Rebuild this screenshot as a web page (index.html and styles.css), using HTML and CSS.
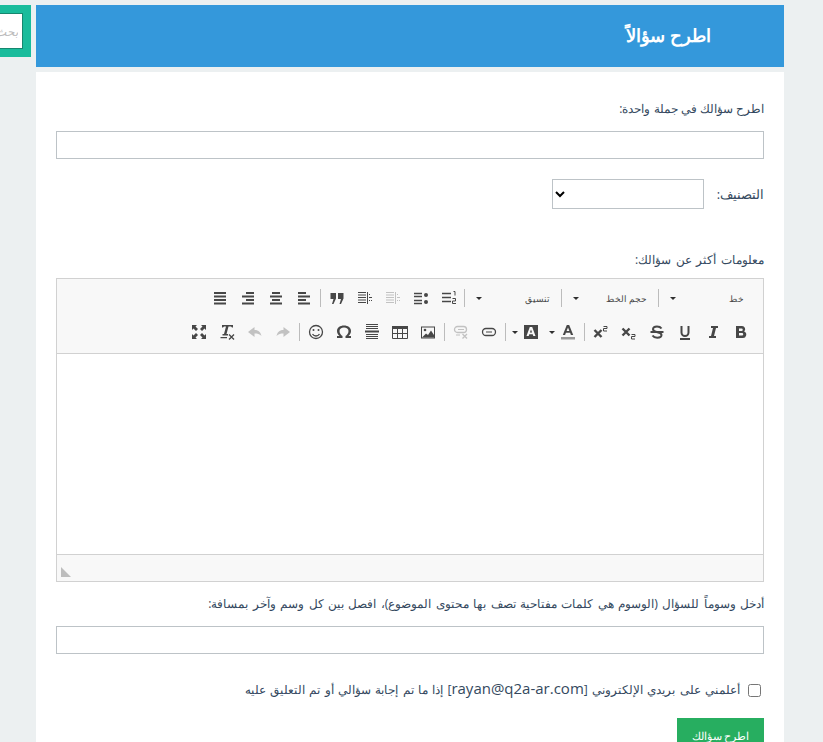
FILE: index.html
```html
<!DOCTYPE html>
<html lang="ar" dir="rtl">
<head>
<meta charset="utf-8">
<title>اطرح سؤالاً</title>
<link rel="stylesheet" href="styles.css">
</head>
<body>
<div class="page">
  <main class="main">
    <h1 class="title">اطرح سؤالاً</h1>
    <form class="panel">
      <label class="label">اطرح سؤالك في جملة واحدة:</label>
      <input class="field" type="text">
      <div class="cat">
        <label class="label cat-label">التصنيف:</label>
        <select class="select"><option></option></select>
      </div>
      <label class="label more">معلومات أكثر عن سؤالك:</label>
      <div class="editor">
        <div class="toolbar">
          <div class="row">
            <span class="combo"><span>خط</span><i class="arrow"></i></span><b class="sep sep-tight"></b>
            <span class="combo"><span>حجم الخط</span><i class="arrow"></i></span><b class="sep sep-tight"></b>
            <span class="combo"><span>تنسيق</span><i class="arrow"></i></span><b class="sep sep-tight"></b>
            <span class="btn first"><svg viewBox="0 0 16 16"><path class="s1 med" d="M1 3.500h9M1 7.500h9M1 11.500h9"/><path class="s1 thin" d="M12.500 1.500h1.500v4M11.500 8.500h3v2.500h-3v2.500h3.500"/></svg></span>
            <span class="btn"><svg viewBox="0 0 16 16"><path class="s1 med" d="M1 3.500h8M1 6.500h8M1 10.500h8M1 13.500h8"/><circle class="f1" cx="13" cy="5" r="2"/><circle class="f1" cx="13" cy="12" r="2"/></svg></span>
            <span class="btn off"><svg viewBox="0 0 16 16"><path class="s1 thin" d="M1 2.500h8M1 5h8M1 7.500h8M1 10h8M1 12.500h8M10.500 2v12M12 7.500h3"/><path class="s1 thin" d="M12 10.500h1M14 10.500h1M12 4.500h1"/></svg></span>
            <span class="btn"><svg viewBox="0 0 16 16"><path class="s1 thin" d="M1 2.500h8M1 5h8M1 7.500h8M1 10h8M1 12.500h8M10.500 2v12M12 7.500h3"/><path class="s1 thin" d="M12 10.500h1M14 10.500h1M12 4.500h1"/></svg></span>
            <span class="btn"><svg viewBox="0 0 16 16"><path class="f1" d="M1.500 3h5.500v5.500L4.500 14H3l1.500-5H1.500zM9 3h5.500v5.500L12 14h-1.500L12 9H9z"/></svg></span>
            <b class="sep"></b>
            <span class="btn"><svg viewBox="0 0 16 16"><path class="s2" d="M2 3h8M2 6.500h12M2 10h8M2 13.500h12"/></svg></span>
            <span class="btn"><svg viewBox="0 0 16 16"><path class="s2" d="M4 3h8M2 6.500h12M4 10h8M2 13.500h12"/></svg></span>
            <span class="btn"><svg viewBox="0 0 16 16"><path class="s2" d="M6 3h8M2 6.500h12M6 10h8M2 13.500h12"/></svg></span>
            <span class="btn"><svg viewBox="0 0 16 16"><path class="s2" d="M2 3h12M2 6.500h12M2 10h12M2 13.500h12"/></svg></span>
          </div>
          <div class="row">
            <span class="btn"><svg viewBox="0 0 16 16"><path class="f1" d="M3 2h6a3.200 3.200 0 0 1 2.200 5.500A3.400 3.400 0 0 1 9.500 14H3zM6 4.500V7h2.500a1.250 1.250 0 0 0 0-2.500zM6 9v2.500h3a1.250 1.250 0 0 0 0-2.500z" fill-rule="evenodd"/></svg></span>
            <span class="btn"><svg viewBox="0 0 16 16"><path class="f1" d="M6 2h7v2h-2L9 12h2v2H4v-2h2L8 4H6z"/></svg></span>
            <span class="btn"><svg viewBox="0 0 16 16"><path class="s2" d="M4.500 2v6.500a3.500 3.500 0 0 0 7 0V2"/><path class="s2" d="M3 15h10"/></svg></span>
            <span class="btn"><svg viewBox="0 0 16 16"><path class="s2" d="M12.500 4.500C11.500 3 10 2.500 8 2.500c-2.500 0-4 1.100-4 2.800C4 9 12.500 7.500 12.500 11c0 1.600-1.800 2.700-4.300 2.700-2.200 0-3.800-.8-4.700-2.200M1.500 8h13"/></svg></span>
            <span class="btn"><svg viewBox="0 0 16 16"><path class="s2 wide" d="M1.500 4.500l7 7M8.500 4.500l-7 7"/><path class="s1 thin" d="M10.500 10.500h3.500v2h-3.500v2.500H14"/></svg></span>
            <span class="btn"><svg viewBox="0 0 16 16"><path class="s2 wide" d="M1.500 6l7 7M8.500 6l-7 7"/><path class="s1 thin" d="M10.500 2.500h3.500v2h-3.500V7H14"/></svg></span>
            <b class="sep"></b>
            <span class="btn color"><svg viewBox="0 0 16 16"><path class="f1" d="M6.800 1h2.400l4 10h-2.300l-.8-2.200H5.900L5.100 11H2.800zM8 3.500L6.600 7h2.800z" fill-rule="evenodd"/><rect class="bar" x="1" y="13" width="14" height="2.500"/></svg><i class="arrow"></i></span>
            <span class="btn color"><svg viewBox="0 0 16 16"><path class="f1" d="M1 1h14v14H1zM6.800 3L3.500 12h2.200l.6-1.800h3.400l.6 1.800h2.200L9.200 3zM8 5.500l1.100 3H6.900z" fill-rule="evenodd"/></svg><i class="arrow"></i></span>
            <b class="sep"></b>
            <span class="btn"><svg viewBox="0 0 16 16"><rect class="s1 med" x="1.500" y="4.500" width="13" height="7" rx="3.500"/><path class="s1 thin" d="M5 8h6"/></svg></span>
            <span class="btn off"><svg viewBox="0 0 16 16"><rect class="s1 med" x="1.500" y="2.500" width="12" height="6" rx="3"/><path class="s1 thin" d="M5 5.500h6M3 11h4"/><path class="s1 med" d="M9.500 10l4.500 4.500M14 10l-4.500 4.500"/></svg></span>
            <b class="sep"></b>
            <span class="btn"><svg viewBox="0 0 16 16"><path class="f1" d="M1 2.500h14v12H1zM2 3.500v10h12v-10z" fill-rule="evenodd"/><circle class="f1" cx="5" cy="6" r="1.300"/><path class="f1" d="M2 13.500l4-4 2 1.500 3-4.500 3 4.500v2.500z"/></svg></span>
            <span class="btn"><svg viewBox="0 0 16 16"><path class="f1" d="M0 2h16v3H0z"/><path class="s1 thin" d="M.5 2v12.500h15V2M.5 9.500h15M5.500 4v10.500M10.500 4v10.500"/></svg></span>
            <span class="btn"><svg viewBox="0 0 16 16"><path class="s1 thin" d="M2 .5h12M2 2.500h12M2 4.500h12M2 10.500h12M2 12.500h12M2 14.500h12"/><path class="s2" d="M1 7.500h14"/></svg></span>
            <span class="btn"><svg viewBox="0 0 16 16"><path class="f1" d="M1 14v-2h2.500C2 10.700 1 9 1 7c0-3.300 3-5.500 7-5.500S15 3.700 15 7c0 2-1 3.700-2.500 5H15v2H9.500v-2c1.500-1 3-2.500 3-5 0-2.200-2-3.500-4.500-3.500S3.500 4.800 3.500 7c0 2.500 1.500 4 3 5v2z"/></svg></span>
            <span class="btn"><svg viewBox="0 0 16 16"><circle class="s1 med" cx="8" cy="8" r="6.500"/><circle class="f1" cx="5.500" cy="6" r="1"/><circle class="f1" cx="10.500" cy="6" r="1"/><path class="s1 med" d="M4.500 10c1 1.500 2 2 3.500 2s2.500-.5 3.500-2"/></svg></span>
            <b class="sep"></b>
            <span class="btn off"><svg viewBox="0 0 16 16"><path class="f1" d="M15 8L8.500 3v3C4 6 2.500 8.500 1.500 12 3.500 10 5.500 9.500 8.500 9.500V13z"/></svg></span>
            <span class="btn off"><svg viewBox="0 0 16 16"><path class="f1" d="M1 8l6.500-5v3c4.500 0 6 2.500 7 6-2-2-4-2.500-7-2.500V13z"/></svg></span>
            <span class="btn"><svg viewBox="0 0 16 16"><path class="f1" d="M3 1h11v2.500h-1L12 2.500H9.500L7.500 10H9v1.500H3.500V10H5l2-7.500H5L4 3.500H3zM1.500 13h6.500v1.200H1.500z"/><path class="s1 med" d="M10 10.500l5 5M15 10.500l-5 5"/></svg></span>
            <span class="btn"><svg viewBox="0 0 16 16"><path class="f1" d="M1 1h5L4.500 2.500 7 5 5 7 2.500 4.500 1 6zM15 1v5l-1.500-1.500L11 7 9 5l2.500-2.500L10 1zM1 15v-5l1.500 1.500L5 9l2 2-2.500 2.500L6 15zM15 15h-5l1.500-1.500L9 11l2-2 2.500 2.500L15 10z"/></svg></span>
          </div>
        </div>
        <div class="content"></div>
        <div class="statusbar"><i class="resize"></i></div>
      </div>
      <label class="label tags">أدخل وسوماً للسؤال (الوسوم هي كلمات مفتاحية تصف بها محتوى الموضوع)، افصل بين كل وسم وآخر بمسافة:</label>
      <input class="field" type="text">
      <label class="notify"><input class="check" type="checkbox"><span class="notify-text">أعلمني على بريدي الإلكتروني [<span class="email">rayan@q2a-ar.com</span>] إذا ما تم إجابة سؤالي أو تم التعليق عليه</span></label>
      <button class="submit" type="button">اطرح سؤالك</button>
    </form>
  </main>
  <aside class="side">
    <input class="search-input" type="text" placeholder="بحث...">
  </aside>
</div>
</body>
</html>
```
FILE: styles.css
```css
html, body {
  margin: 0;
  height: 742px;
  overflow: hidden;
  background: #ecf0f1;
}
body {
  font-family: "Open Sans", "Liberation Sans", sans-serif;
  font-size: 12px;
  color: #34495e;
}
.page {
  display: flex;
  padding: 5px 39px 0 0;
  gap: 5px;
  direction: rtl;
  width: 784px;
}
.main { width: 748px; flex: none; }
.title {
  margin: 0 0 5px;
  height: 62px;
  line-height: 60px;
  padding-right: 73px;
  background: #3498db;
  color: #fff;
  font-size: 18px;
  font-weight: 700;
}
.panel {
  display: flex;
  flex-direction: column;
  align-items: stretch;
  height: 670px;
  overflow: hidden;
  background: #fff;
  padding: 27px 20px 0;
  box-sizing: border-box;
}
.label { display: block; flex: none; line-height: 20px; font-size: 12.1px; }
.field {
  height: 28px;
  flex: none;
  margin: 12px 0 0;
  padding: 0 8px;
  border: 1px solid #bdc3c7;
  background: #fff;
  box-sizing: border-box;
  width: 100%;
}
.cat {
  display: flex;
  flex: none;
  align-items: center;
  margin-top: 20px;
  gap: 12px;
}
.cat-label { width: 48px; flex: none; font-size: 12.8px; }
.select {
  width: 152px;
  height: 30px;
  border: 1px solid #bdc3c7;
  background: #fff;
  border-radius: 0;
  font-size: 14px;
}
.more { margin-top: 41px; word-spacing: 1.5px; }
.editor {
  margin-top: 8px;
  border: 1px solid #d1d1d1;
  height: 304px;
  flex: none;
  box-sizing: border-box;
  display: flex;
  flex-direction: column;
  direction: rtl;
}
.toolbar {
  height: 75px;
  flex: none;
  box-sizing: border-box;
  padding: 2px 8px 0;
  background: #f8f8f8;
  border-bottom: 1px solid #d1d1d1;
}
.row { display: flex; align-items: center; height: 34px; }
.combo {
  display: flex;
  justify-content: space-between;
  align-items: center;
  width: 96px;
  height: 100%;
  box-sizing: border-box;
  padding: 0 11px;
  font-size: 9px;
  color: #484848;
}
.arrow {
  display: block;
  width: 0;
  height: 0;
  border-top: 3px solid #2f2f2f;
  border-left: 3px solid transparent;
  border-right: 3px solid transparent;
}
.sep {
  display: block;
  width: 1px;
  height: 18px;
  margin: 0 2px;
  background: #bcbcbc;
}
.sep-tight { margin: 0; }
.btn {
  display: flex;
  align-items: center;
  justify-content: center;
  flex: none;
  width: 28px;
  height: 34px;
  gap: 5px;
}
.first { margin-right: 1px; }
.btn svg { width: 16px; height: 16px; display: block; }
.color { width: 37px; justify-content: flex-start; padding-right: 6px; box-sizing: border-box; }
.s1 { fill: none; stroke: #474747; stroke-width: 1.5; }
.s2 { fill: none; stroke: #474747; stroke-width: 2; }
.thin { stroke-width: 1; }
.med { stroke-width: 1.3; }
.wide { stroke-width: 2.4; }
.f1 { fill: #474747; }
.bar { fill: #9a9a9a; }
.off svg { opacity: .3; }
.content { flex: 1; background: #fff; }
.statusbar {
  height: 27px;
  flex: none;
  display: flex;
  align-items: flex-end;
  justify-content: flex-end;
  box-sizing: border-box;
  padding: 0 4px 4px;
  background: #f8f8f8;
  border-top: 1px solid #d1d1d1;
}
.resize {
  display: block;
  width: 0;
  height: 0;
  border-bottom: 10px solid #bdbdbd;
  border-right: 10px solid transparent;
}
.tags { margin-top: 12px; font-size: 12.3px; word-spacing: 1.2px; }
.notify {
  display: flex;
  flex: none;
  align-items: center;
  gap: 8px;
  height: 20px;
  margin-top: 26px;
  padding-right: 3px;
}
.notify-text { font-size: 12.3px; line-height: 20px; word-spacing: 1.1px; }
.email { font-size: 15px; line-height: 1; }
.check { width: 13px; height: 13px; margin: 0; flex: none; }
.submit {
  align-self: flex-start;
  flex: none;
  width: 87px;
  height: 34px;
  margin-top: 18px;
  padding: 0;
  border: 0;
  background: #27ae60;
  color: #fff;
  font: 11px "Open Sans", "Liberation Sans", sans-serif;
}
.side {
  width: 31px;
  height: 52px;
  flex: none;
  box-sizing: border-box;
  background: #1abc9c;
  padding: 8px 8px 8px 0;
  overflow: hidden;
}
.search-input {
  width: 100px;
  height: 36px;
  box-sizing: border-box;
  border: 1px solid #16876f;
  padding: 0 4px 0 0;
  margin: 0;
  direction: rtl;
  font: 12px "Open Sans", "Liberation Sans", sans-serif;
  background: #fff;
  outline: 0;
}
.search-input::placeholder { color: #bbb; font-style: italic; }
```
